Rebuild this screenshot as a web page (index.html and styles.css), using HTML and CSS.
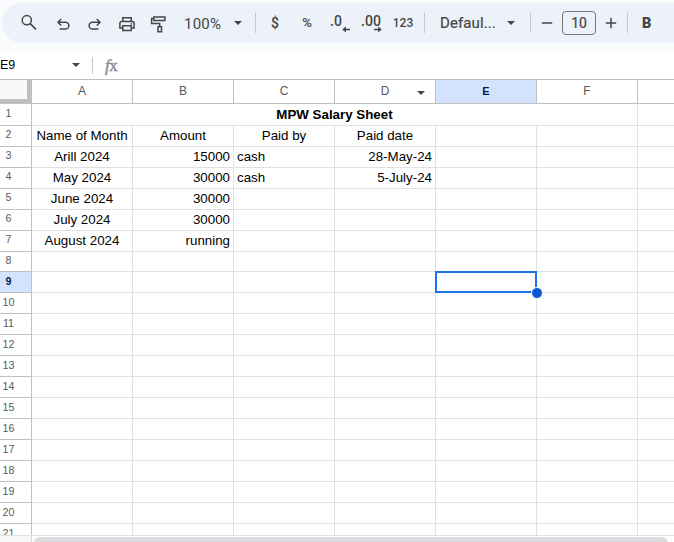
FILE: index.html
```html
<!DOCTYPE html>
<html lang="en">
<head>
<meta charset="utf-8">
<title>MPW Salary Sheet</title>
<link rel="stylesheet" href="styles.css">
</head>
<body>
<div class="app">
  <header class="top">
    <div class="toolbar">
      <span class="tool search"><svg width="20" height="20" viewBox="0 0 20 20"><circle cx="7.8" cy="7.2" r="4.6"/><path d="M11.2 10.6L17 16.4"/></svg></span>
      <span class="tool"><svg width="20" height="20" viewBox="0 0 20 20"><path d="M8.2 5.9L5 9.2l3.2 3.3M5 9.2h7.4a3.45 3.45 0 0 1 0 6.9H6.6"/></svg></span>
      <span class="tool"><svg width="20" height="20" viewBox="0 0 20 20"><path d="M11.8 5.9L15 9.2l-3.2 3.3M15 9.2H7.6a3.45 3.45 0 0 0 0 6.9h5.8"/></svg></span>
      <span class="tool"><svg width="20" height="20" viewBox="0 0 20 20"><path d="M5.8 8.4V4.8h8.4v3.6M5.6 15H2.9v-4.8q0-1.8 1.8-1.8h10.6q1.8 0 1.8 1.8V15h-2.7M5.8 12.8h8.4v4.6H5.8z"/><circle class="fill" cx="14.4" cy="10.9" r=".8"/></svg></span>
      <span class="tool paint"><svg width="20" height="20" viewBox="0 0 20 20"><path d="M4.8 3.9h11.1v3.5H4.8zM4.8 5.6H2.6v4.8h8.1v3.4M9 13.8h3.5v5H9z"/></svg></span>
      <span class="zoom">100%</span><span class="arrow zoom-arrow"></span>
      <span class="divider"></span>
      <span class="format currency">$</span>
      <span class="format percent">%</span>
      <span class="format decimal">.0<svg width="9" height="7" viewBox="0 0 9 7"><path d="M1.5 3.5H8"/><path class="fill" d="M0.3 3.5L4 .4v6.2z"/></svg></span>
      <span class="format decimal more">.00<svg width="9" height="7" viewBox="0 0 9 7"><path d="M0 3.5h6"/><path class="fill" d="M7.8 3.5L4.1.4v6.2z"/></svg></span>
      <span class="format number">123</span>
      <span class="divider number-divider"></span>
      <span class="font">Defaul...</span><span class="arrow font-arrow"></span>
      <span class="divider font-divider"></span>
      <span class="step"><svg width="12" height="12" viewBox="0 0 12 12"><path d="M.8 6h10.4"/></svg></span>
      <span class="size">10</span>
      <span class="step plus"><svg width="12" height="12" viewBox="0 0 12 12"><path d="M.8 6h10.4M6 .8v10.4"/></svg></span>
      <span class="divider"></span>
      <span class="bold">B</span>
    </div>
  </header>
  <div class="formula">
    <span class="name">E9</span><span class="arrow"></span><span class="rule"></span>
    <span class="fx"><i>f</i>x</span>
  </div>
  <main class="sheet">
    <div class="row head"><b class="corner"></b><b>A</b><b>B</b><b>C</b><b class="has-menu">D<span class="arrow"></span></b><b class="active">E</b><b>F</b><b></b></div>
    <div class="row"><b>1</b><span class="title">MPW Salary Sheet</span><span></span></div>
    <div class="row center"><b>2</b><span>Name of Month</span><span>Amount</span><span>Paid by</span><span>Paid date</span><span></span><span></span><span></span></div>
    <div class="row"><b>3</b><span class="mid">Arill 2024</span><span class="end">15000</span><span>cash</span><span class="end">28-May-24</span><span></span><span></span><span></span></div>
    <div class="row"><b>4</b><span class="mid">May 2024</span><span class="end">30000</span><span>cash</span><span class="end">5-July-24</span><span></span><span></span><span></span></div>
    <div class="row"><b>5</b><span class="mid">June 2024</span><span class="end">30000</span><span></span><span></span><span></span><span></span><span></span></div>
    <div class="row"><b>6</b><span class="mid">July 2024</span><span class="end">30000</span><span></span><span></span><span></span><span></span><span></span></div>
    <div class="row"><b>7</b><span class="mid">August 2024</span><span class="end">running</span><span></span><span></span><span></span><span></span><span></span></div>
    <div class="row"><b>8</b><span></span><span></span><span></span><span></span><span></span><span></span><span></span></div>
    <div class="row"><b class="active">9</b><span></span><span></span><span></span><span></span><span class="selected"></span><span></span><span></span></div>
    <div class="row"><b>10</b><span></span><span></span><span></span><span></span><span></span><span></span><span></span></div>
    <div class="row"><b>11</b><span></span><span></span><span></span><span></span><span></span><span></span><span></span></div>
    <div class="row"><b>12</b><span></span><span></span><span></span><span></span><span></span><span></span><span></span></div>
    <div class="row"><b>13</b><span></span><span></span><span></span><span></span><span></span><span></span><span></span></div>
    <div class="row"><b>14</b><span></span><span></span><span></span><span></span><span></span><span></span><span></span></div>
    <div class="row"><b>15</b><span></span><span></span><span></span><span></span><span></span><span></span><span></span></div>
    <div class="row"><b>16</b><span></span><span></span><span></span><span></span><span></span><span></span><span></span></div>
    <div class="row"><b>17</b><span></span><span></span><span></span><span></span><span></span><span></span><span></span></div>
    <div class="row"><b>18</b><span></span><span></span><span></span><span></span><span></span><span></span><span></span></div>
    <div class="row"><b>19</b><span></span><span></span><span></span><span></span><span></span><span></span><span></span></div>
    <div class="row"><b>20</b><span></span><span></span><span></span><span></span><span></span><span></span><span></span></div>
    <div class="row"><b>21</b><span></span><span></span><span></span><span></span><span></span><span></span><span></span></div>
  </main>
  <footer class="scroll"><span class="scroll-gap"></span><span class="track"><span class="thumb"></span></span></footer>
</div>
</body>
</html>
```

FILE: styles.css
```css
* { box-sizing: border-box; }
body { margin: 0; background: #fff; overflow: hidden; }
.app {
  display: flex;
  flex-direction: column;
  width: 674px;
  height: 542px;
  overflow: hidden;
  font-family: "Liberation Sans", Arial, sans-serif;
}
svg { display: block; fill: none; stroke: #444746; stroke-width: 1.5; }
svg .fill { fill: #444746; stroke: none; }
.arrow {
  flex: none;
  width: 8px;
  height: 4px;
  background: #444746;
  clip-path: polygon(0 0, 100% 0, 50% 100%);
}

/* Toolbar */
.top { flex: none; height: 51px; padding: 3px 0 0 2px; background: #f9fbfd; }
.toolbar {
  display: flex;
  align-items: center;
  width: 720px;
  height: 40px;
  padding-left: 10px;
  border-radius: 20px;
  background: #edf2fa;
  color: #444746;
  font-family: Roboto, sans-serif;
  font-weight: 500;
  white-space: nowrap;
}
.toolbar > * { flex: none; }
.tool { display: flex; justify-content: center; width: 32px; }
.search { width: 34px; margin-right: 1px; }
.paint { width: 31px; }
.zoom { width: 60px; padding: 1px 0 0 10px; font-size: 15px; font-weight: 400; letter-spacing: .25px; }
.zoom-arrow { margin-right: 13px; }
.divider { width: 1px; height: 20px; background: #c7c7c7; }
.format { display: flex; justify-content: center; position: relative; width: 32px; font-size: 14px; line-height: 18px; }
.currency { margin-left: 3px; font-size: 14px; }
.percent { font-size: 13px; font-weight: 400; -webkit-text-stroke: .2px #444746; }
.decimal { font-size: 14px; padding-right: 6px; top: -2px; }
.decimal svg { position: absolute; left: 19px; top: 14px; }
.more { padding-right: 0; }
.number { font-size: 12px; }
.number-divider { margin-left: 5px; }
.font { width: 67px; margin-left: 15px; font-size: 15px; font-weight: 400; letter-spacing: .1px; -webkit-text-stroke: .2px #444746; }
.font-arrow { margin-right: 15px; }
.step { display: flex; justify-content: center; width: 31px; }
.plus { padding-right: 2px; }
.size {
  width: 34px;
  height: 24px;
  border: 1px solid #747775;
  border-radius: 4px;
  text-align: center;
  font-size: 14px;
  font-weight: 400;
  line-height: 22px;
  -webkit-text-stroke: .2px #444746;
}
.bold { margin-left: 14px; padding-top: 1px; font-size: 14.5px; font-weight: 900; }

/* Name box and formula bar */
.formula { display: flex; align-items: center; flex: none; height: 29px; border-bottom: 1px solid #c0c0c0; }
.name { width: 72px; font-size: 12.5px; line-height: 15px; white-space: nowrap; }
.rule { width: 1px; height: 17px; margin: 0 12px 0 12px; background: #c7c7c7; }
.fx { padding-top: 1px; color: #8a8c8e; font-family: "Liberation Serif", serif; font-size: 17px; line-height: 18px; letter-spacing: -.5px; -webkit-text-stroke: .4px #8a8c8e; }

/* Grid */
.sheet { flex: none; height: 455px; overflow: hidden; }
.row {
  display: grid;
  grid-template-columns: 46px repeat(6, 101px) 101px;
  height: 21px;
  margin-left: -14px;
  font-size: 13.333px;
}
.row > * { border: solid #e1e1e1; border-width: 0 1px 1px 0; }
.row > span { padding: 0 3px; line-height: 21px; color: #000; white-space: nowrap; }
.row > b { border-color: #c0c0c0; color: #575a5a; font-size: 10.667px; font-weight: 400; line-height: 19px; text-align: center; }
.row > .active { background: #d3e3fd; color: #041e49; font-weight: 700; }
.head { height: 24px; }
.head > b { font-size: 12px; line-height: 22px; }
.head > .active { font-size: 11px; }
.head > .corner { border: solid #c0c0c0; border-width: 0 5px 5px 0; background: #f8f9fa; }
.head > .has-menu { position: relative; }
.has-menu .arrow { position: absolute; right: 10px; top: 11px; }
.row > .title { grid-column: 2 / 8; text-align: center; font-weight: 700; }
.center > span, .row > .mid { text-align: center; }
.row > .end { text-align: right; }
.row > .selected { position: relative; }
.selected::before { content: ""; position: absolute; inset: -1px; border: 2px solid #1a73e8; }
.selected::after {
  content: "";
  position: absolute;
  right: -7px;
  bottom: -7px;
  width: 10px;
  height: 10px;
  border: 1px solid #fff;
  border-radius: 50%;
  background: #0b57d0;
}

/* Horizontal scrollbar */
.scroll { display: flex; flex: none; height: 7px; border-top: 1px solid #e1e1e1; }
.scroll-gap { width: 32px; background: #f8f8f8; border-right: 1px solid #d9d9d9; }
.track { flex: 1; padding: 1px 6px 0 2px; }
.thumb { display: block; height: 12px; border-radius: 6px; background: #dadce0; }
```
